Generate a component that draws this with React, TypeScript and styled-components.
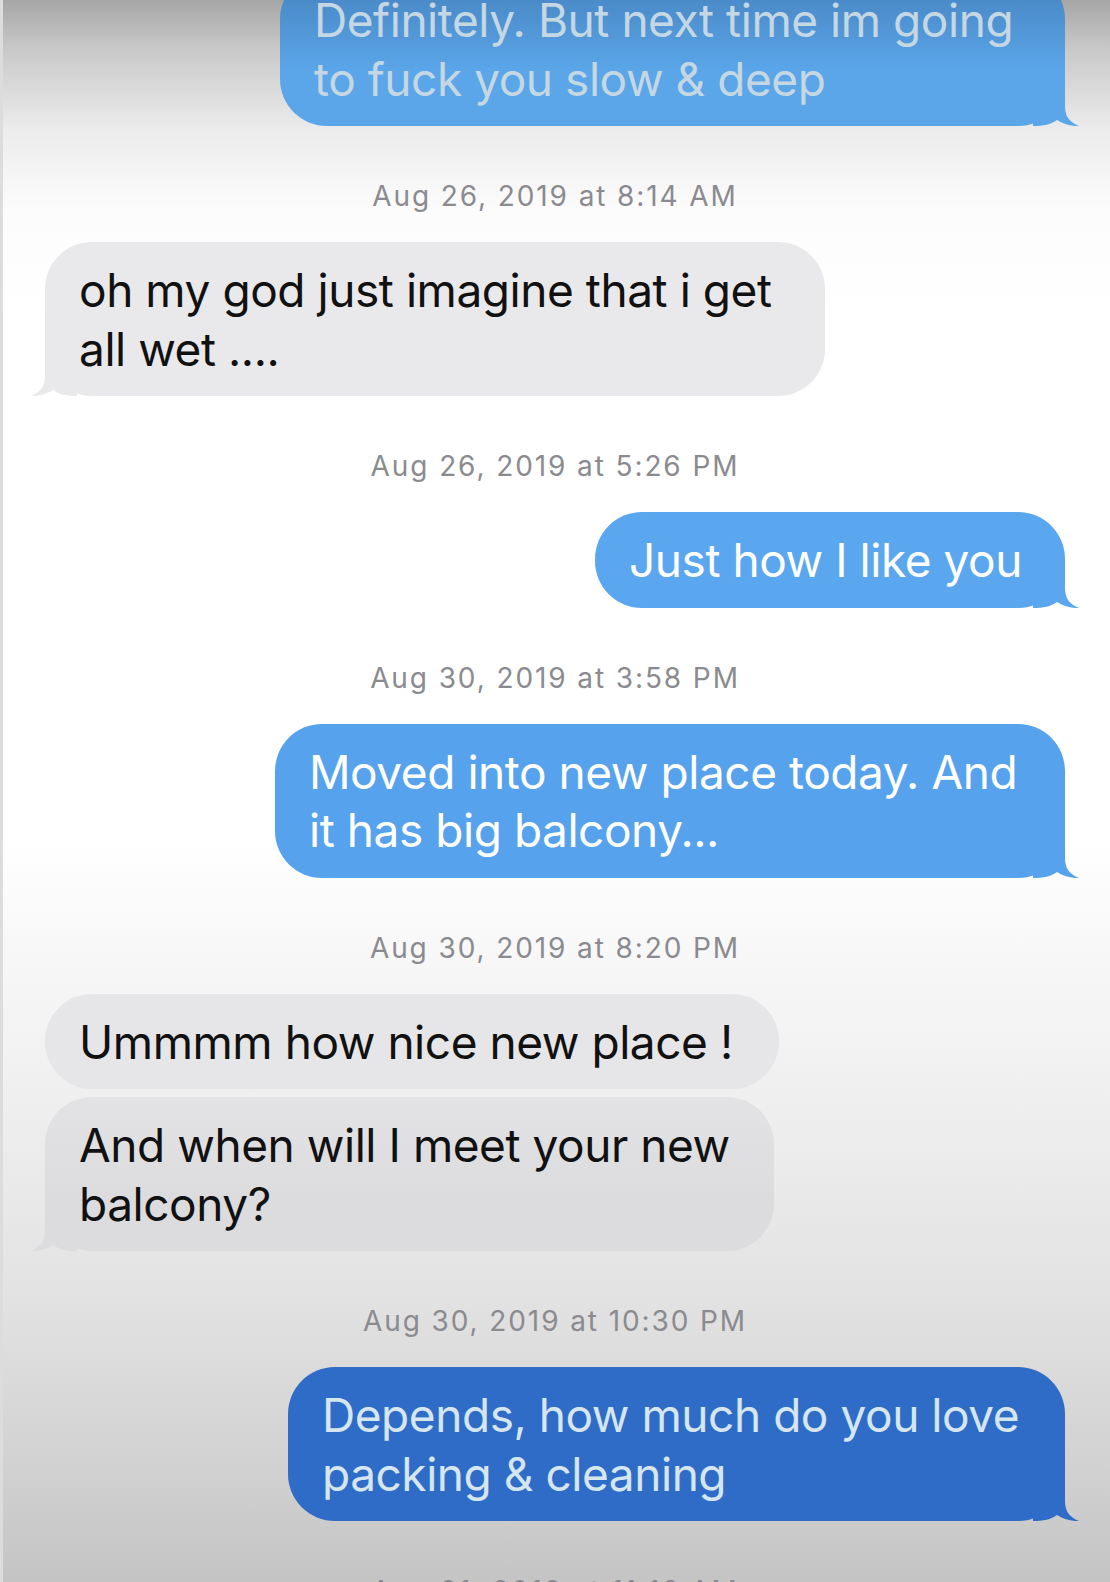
import React from 'react';
import styled, { createGlobalStyle } from 'styled-components';

const Global = createGlobalStyle`
  html, body { margin: 0; padding: 0; }
  body {
    width: 1110px;
    height: 1582px;
    overflow: hidden;
    font-family: Inter, "Noto Sans", "Liberation Sans", sans-serif;
    -webkit-font-smoothing: antialiased;
  }
`;

const Screen = styled.div`
  width: 1110px;
  height: 1582px;
  box-sizing: border-box;
  overflow: hidden;
  display: flex;
  flex-direction: column;
  border-left: 3px solid #dcdcdc;
  background: linear-gradient(
    to bottom,
    #a6a6a6 0px,
    #c9c9c9 50px,
    #ececec 130px,
    #fcfcfc 210px,
    #ffffff 320px,
    #ffffff 840px,
    #f7f7f7 960px,
    #eeeeee 1120px,
    #e2e2e2 1300px,
    #d2d2d2 1460px,
    #c4c4c4 1582px
  );
`;

const Thread = styled.div`
  display: flex;
  flex-direction: column;
  margin-top: -28px;
  padding: 0 45px 0 42px;
`;

type Side = 'me' | 'them';

const Bubble = styled.div<{ $side: Side; $w: number; $bg: string; $fg: string }>`
  position: relative;
  align-self: ${(p) => (p.$side === 'me' ? 'flex-end' : 'flex-start')};
  width: ${(p) => p.$w}px;
  box-sizing: border-box;
  padding: 19px 20px 18px 34px;
  border-radius: 47px;
  background: ${(p) => p.$bg};
  color: ${(p) => p.$fg};
  font-size: 46px;
  line-height: 58.5px;
  letter-spacing: -0.45px;
  white-space: nowrap;

  & + & {
    margin-top: 8px;
  }
`;

const Tail = styled.svg<{ $side: Side }>`
  position: absolute;
  bottom: 0;
  width: 50px;
  height: 50px;
  ${(p) => (p.$side === 'me' ? 'right: -14px;' : 'left: -14px; transform: scaleX(-1);')}
`;

const Stamp = styled.div`
  align-self: center;
  margin: 53px 0 29px;
  line-height: 34px;
  font-size: 28px;
  letter-spacing: 1.9px;
  color: #8b8b8f;
  white-space: nowrap;
`;

type Msg =
  | { kind: 'stamp'; text: string }
  | {
      kind: 'msg';
      side: Side;
      w: number;
      bg: string;
      tail: string;
      fg: string;
      lines: string[];
      hasTail: boolean;
    };

const messages: Msg[] = [
  {
    kind: 'msg',
    side: 'me',
    w: 785,
    bg: 'linear-gradient(to bottom, #4580bd 0%, #5aa6e8 64%, #5aa6e8 100%)',
    tail: '#5aa6e8',
    fg: '#c5d7e2',
    lines: ['Definitely. But next time im going', 'to fuck you slow & deep'],
    hasTail: true,
  },
  { kind: 'stamp', text: 'Aug 26, 2019 at 8:14 AM' },
  {
    kind: 'msg',
    side: 'them',
    w: 780,
    bg: '#e9e9eb',
    tail: '#e9e9eb',
    fg: '#111111',
    lines: ['oh my god just imagine that i get', 'all wet ....'],
    hasTail: true,
  },
  { kind: 'stamp', text: 'Aug 26, 2019 at 5:26 PM' },
  {
    kind: 'msg',
    side: 'me',
    w: 470,
    bg: '#5aa7ef',
    tail: '#5aa7ef',
    fg: '#ffffff',
    lines: ['Just how I like you'],
    hasTail: true,
  },
  { kind: 'stamp', text: 'Aug 30, 2019 at 3:58 PM' },
  {
    kind: 'msg',
    side: 'me',
    w: 790,
    bg: '#56a2ed',
    tail: '#56a2ed',
    fg: '#ffffff',
    lines: ['Moved into new place today. And', 'it has big balcony...'],
    hasTail: true,
  },
  { kind: 'stamp', text: 'Aug 30, 2019 at 8:20 PM' },
  {
    kind: 'msg',
    side: 'them',
    w: 734,
    bg: '#e6e6e8',
    tail: '#e6e6e8',
    fg: '#111111',
    lines: ['Ummmm how nice new place !'],
    hasTail: false,
  },
  {
    kind: 'msg',
    side: 'them',
    w: 729,
    bg: 'linear-gradient(to bottom, #e3e3e5 0%, #dcdcde 66%, #dcdcde 100%)',
    tail: '#dcdcde',
    fg: '#111111',
    lines: ['And when will I meet your new', 'balcony?'],
    hasTail: true,
  },
  { kind: 'stamp', text: 'Aug 30, 2019 at 10:30 PM' },
  {
    kind: 'msg',
    side: 'me',
    w: 777,
    bg: '#2f6cc7',
    tail: '#2f6cc7',
    fg: '#d6e6ef',
    lines: ['Depends, how much do you love', 'packing & cleaning'],
    hasTail: true,
  },
  { kind: 'stamp', text: 'Aug 31, 2019 at 11:16 AM' },
];

export default function App() {
  return (
    <>
      <Global />
      <Screen>
        <Thread>
          {messages.map((m, i) =>
            m.kind === 'stamp' ? (
              <Stamp key={i}>{m.text}</Stamp>
            ) : (
              <Bubble key={i} $side={m.side} $w={m.w} $bg={m.bg} $fg={m.fg}>
                {m.lines.map((l, j) => (
                  <React.Fragment key={j}>
                    {j > 0 && <br />}
                    {l}
                  </React.Fragment>
                ))}
                {m.hasTail && (
                  <Tail $side={m.side} viewBox="0 0 50 50">
                    <path
                      d="M4 0 L36 0 L36 30 C36 40 40 46 50 50 C42 50.5 34 48 28 44 C22 48.5 14 50 4 50 Z"
                      fill={m.tail}
                    />
                  </Tail>
                )}
              </Bubble>
            )
          )}
        </Thread>
      </Screen>
    </>
  );
}
